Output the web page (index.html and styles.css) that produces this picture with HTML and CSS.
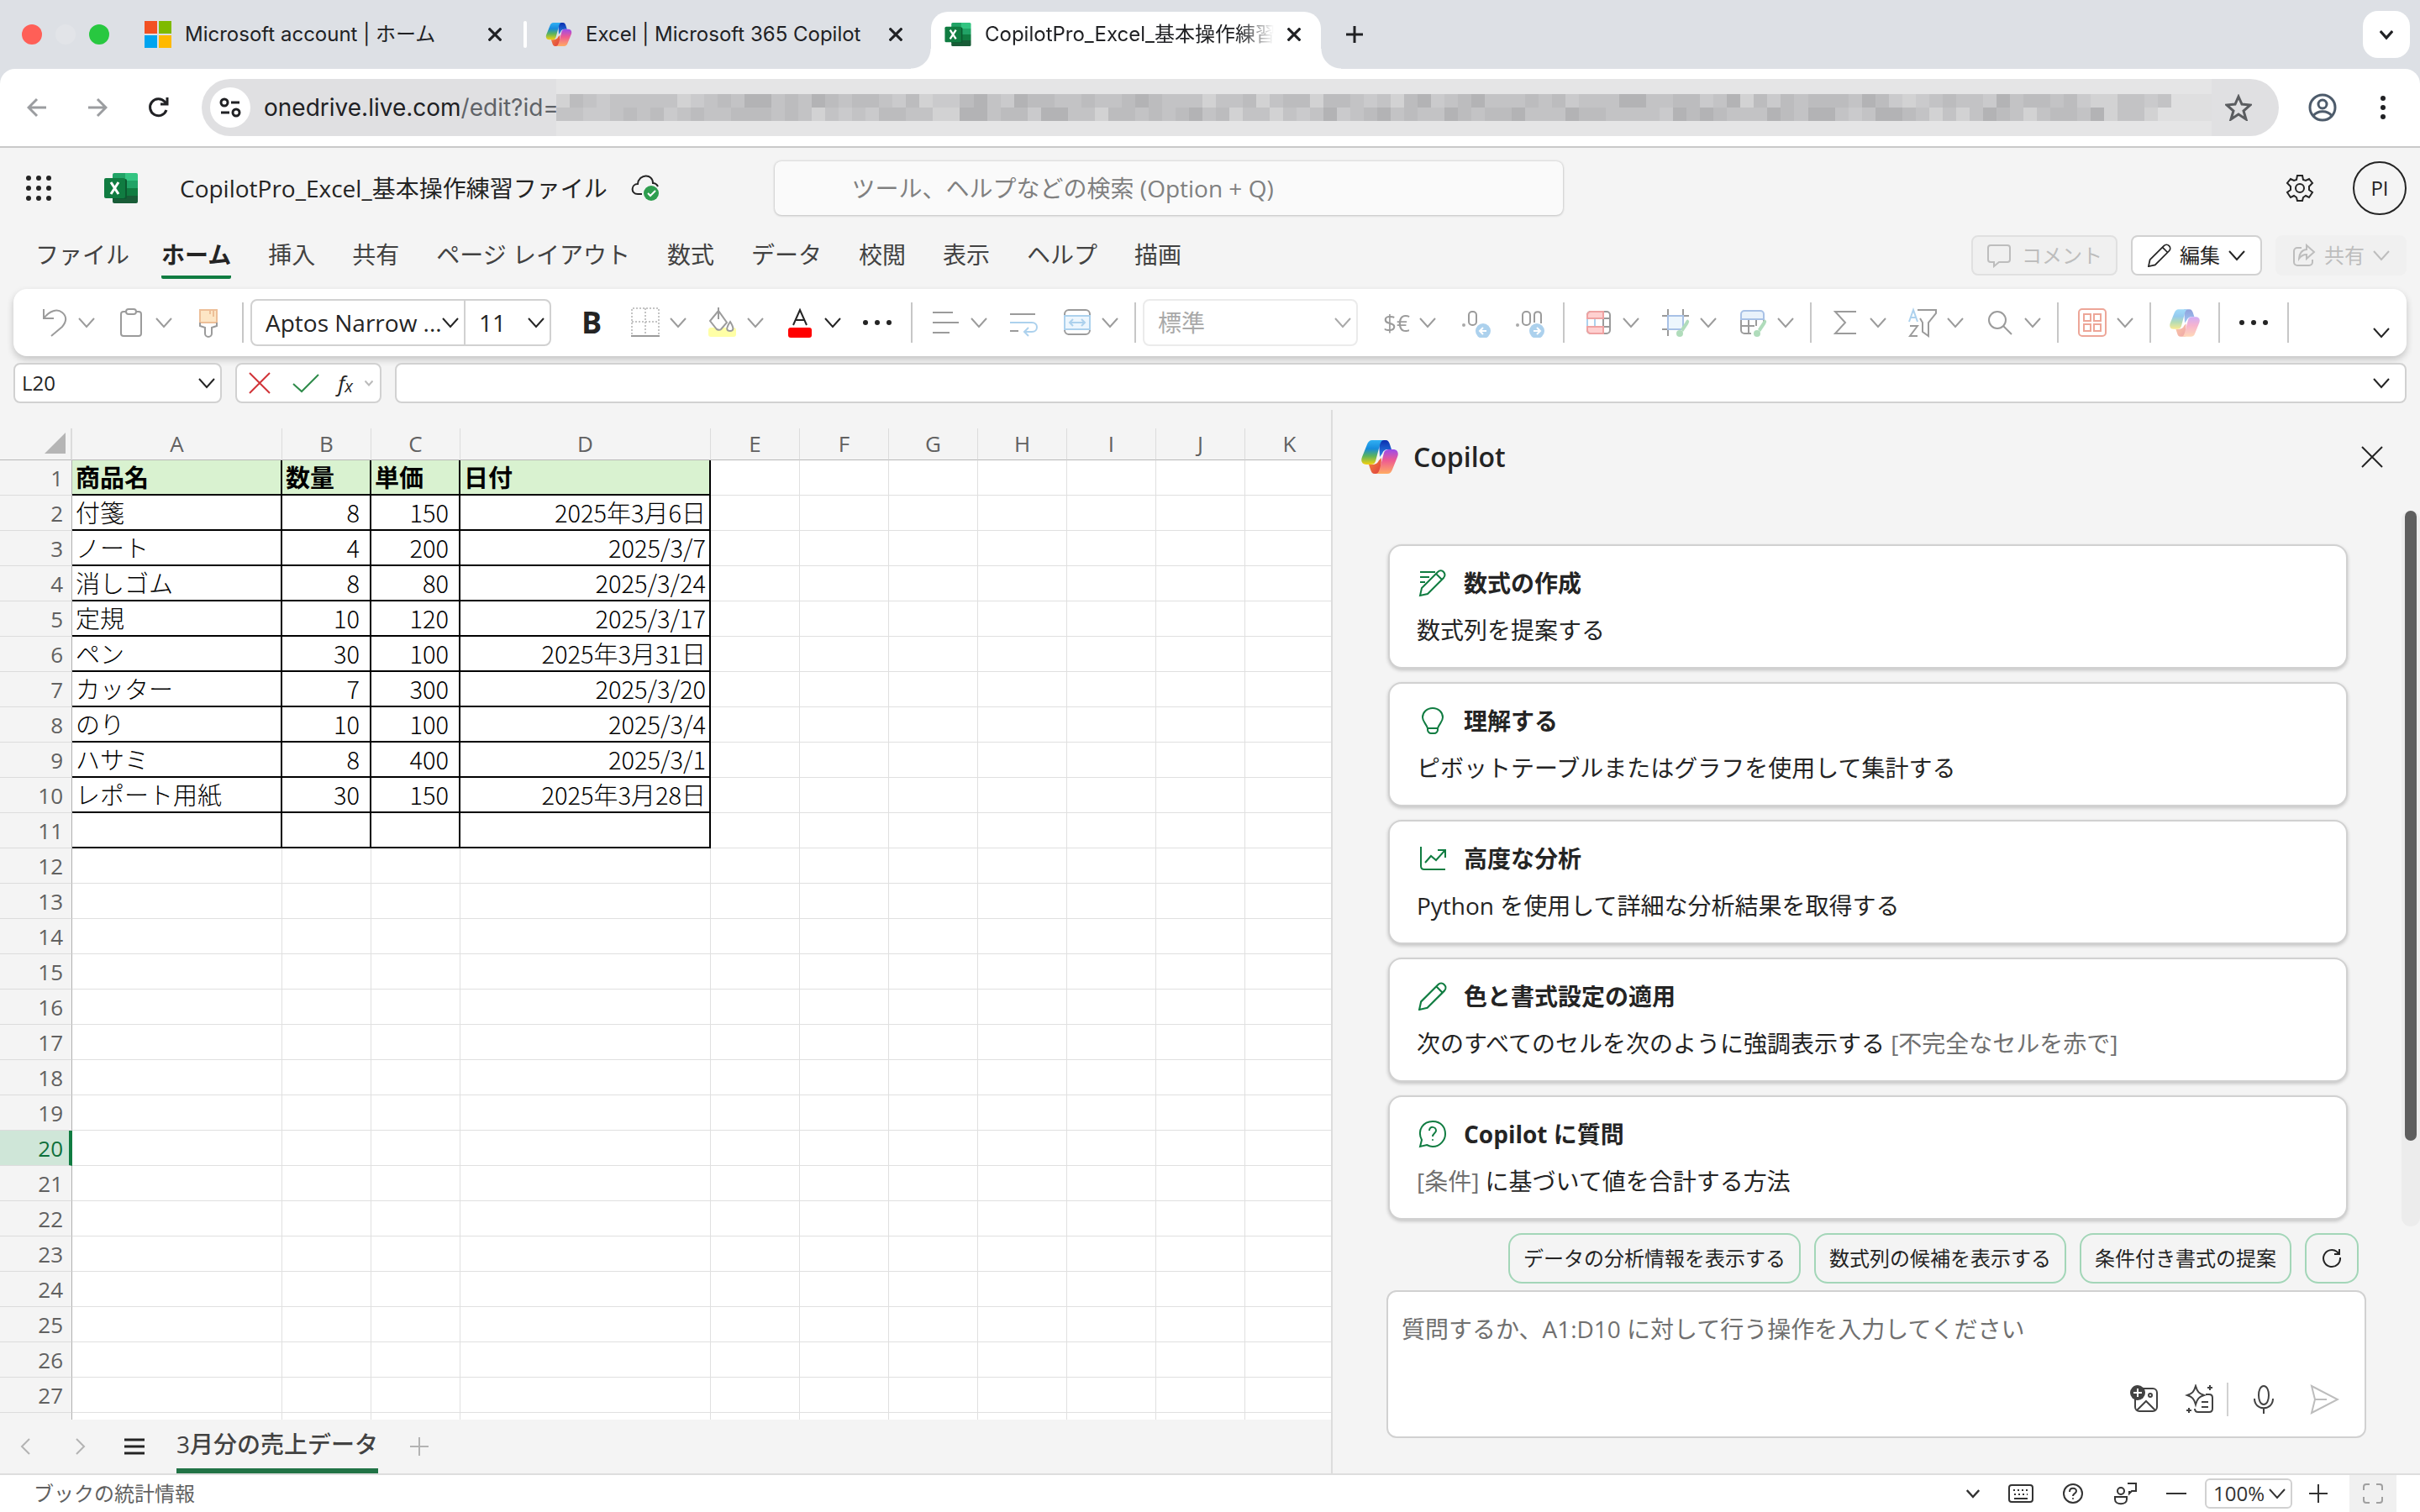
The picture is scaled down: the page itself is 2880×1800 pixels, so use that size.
FILE: index.html
```html
<!DOCTYPE html>
<html lang="ja">
<head>
<meta charset="utf-8">
<title>CopilotPro_Excel_基本操作練習ファイル</title>
<link rel="stylesheet" href="styles.css">
</head>
<body>
<svg class="sprite" width="0" height="0" aria-hidden="true">
  <defs>
    <linearGradient id="gBlue" x1="0" y1="0" x2="0" y2="1"><stop offset="0" stop-color="#0b2fb0"/><stop offset="1" stop-color="#2b86e6"/></linearGradient>
    <linearGradient id="gRed" x1="0" y1="0" x2="1" y2="1"><stop offset="0" stop-color="#f58a3c"/><stop offset="1" stop-color="#dd3b3f"/></linearGradient>
    <linearGradient id="gLeft" x1="0" y1="0" x2="0" y2="1"><stop offset="0" stop-color="#31b0f3"/><stop offset=".35" stop-color="#168bdc"/><stop offset=".65" stop-color="#5cb35c"/><stop offset="1" stop-color="#f6d10f"/></linearGradient>
    <linearGradient id="gRight" x1="0" y1="0" x2="0" y2="1"><stop offset="0" stop-color="#9a4bec"/><stop offset=".45" stop-color="#ee5a92"/><stop offset="1" stop-color="#ffac62"/></linearGradient>
  </defs>
  <symbol id="copilot" viewBox="0 0 44 40">
    <path fill="url(#gBlue)" d="M21 0h8c3 0 4 2 5 5l2 6h-4c-4 0-6 2-7 5l-3 4z"/>
    <path fill="url(#gRed)" d="M23 40h-7c-3 0-4-2-5-5l-2-6h4c4 0 7-2 8-5l3-3z"/>
    <path fill="url(#gLeft)" d="M13 0h14c-3 0-4 3-5 6l-5 19c-1 3-3 4-6 4H6c-5 0-7-4-5-9L7 5c1-3 3-5 6-5z"/>
    <path fill="url(#gRight)" d="M31 40H17c3 0 4-3 5-6l5-19c1-3 3-4 6-4h5c5 0 7 4 5 9l-6 15c-1 3-3 5-6 5z"/>
  </symbol>
  <symbol id="excel" viewBox="0 0 40 36">
    <path fill="#21a366" d="M12 0h14v9H10V2a2 2 0 0 1 2-2z"/><path fill="#33c481" d="M25 0h13a2 2 0 0 1 2 2v7H25z"/>
    <path fill="#107c41" d="M10 9h15v18H10z"/><path fill="#21a366" d="M25 9h15v9H25z"/><path fill="#107c41" d="M25 18h15v9H25z"/>
    <path fill="#185c37" d="M10 27h30v7a2 2 0 0 1-2 2H12a2 2 0 0 1-2-2z"/>
    <path fill="#0b5a30" d="M10 7h15a2 2 0 0 1 2 2v20a2 2 0 0 1-2 2H10z"/>
    <rect fill="#107c41" y="6" width="25" height="24" rx="2"/><path d="M8 11l9 14M17 11L8 25" stroke="#fff" stroke-width="3"/>
  </symbol>
  <symbol id="chev" viewBox="0 0 20 20"><path class="ln" d="M1 5l9 10 9-10"/></symbol>
  <symbol id="x" viewBox="0 0 26 26"><path class="ln" d="M1 1l24 24M25 1L1 25"/></symbol>
  <symbol id="dots" viewBox="0 0 36 36"><g fill="currentColor"><circle cx="4" cy="18" r="3"/><circle cx="18" cy="18" r="3"/><circle cx="32" cy="18" r="3"/></g></symbol>
  <symbol id="pencil" viewBox="0 0 32 32"><path class="ln" d="M1 31l2-9L22 3c2-2 5-2 7 0s2 5 0 7L10 29zM20 5l7 7"/></symbol>
  <symbol id="brush" viewBox="0 0 36 36"><path fill="#52b36b" d="M33 15c2 1 1 3 0 5l-6 9-3-3 6-9c1-2 2-3 3-2z"/><circle cx="23" cy="31" r="4" fill="#52b36b"/></symbol>
</svg>

<header class="browser">
  <div class="tabstrip">
    <div class="lights"><i class="red"></i><i class="grey"></i><i class="green"></i></div>
    <div class="tab tab-one">
      <svg width="32" height="32"><path fill="#f25022" d="M0 0h15v15H0z"/><path fill="#7fba00" d="M17 0h15v15H17z"/><path fill="#00a4ef" d="M0 17h15v15H0z"/><path fill="#ffb900" d="M17 17h15v15H17z"/></svg>
      <span>Microsoft account | ホーム</span>
      <button class="close" aria-label="閉じる"><svg width="16" height="16"><use href="#x"/></svg></button>
    </div>
    <i class="tab-sep"></i>
    <div class="tab tab-two">
      <svg width="32" height="28"><use href="#copilot"/></svg>
      <span>Excel | Microsoft 365 Copilot</span>
      <button class="close" aria-label="閉じる"><svg width="16" height="16"><use href="#x"/></svg></button>
    </div>
    <div class="tab tab-active">
      <svg width="32" height="28"><use href="#excel"/></svg>
      <span>CopilotPro_Excel_基本操作練習</span>
      <button class="close" aria-label="閉じる"><svg width="16" height="16"><use href="#x"/></svg></button>
    </div>
    <button class="newtab" aria-label="新しいタブ"><svg width="20" height="20"><path class="ln" d="M10 0v20M0 10h20"/></svg></button>
    <button class="tablist" aria-label="タブを検索"><svg width="16" height="16"><use href="#chev"/></svg></button>
  </div>
  <div class="navbar">
    <button class="nav off" aria-label="戻る"><svg width="24" height="24"><path class="ln" d="M23 12H2M12 2L2 12l10 10"/></svg></button>
    <button class="nav off" aria-label="進む"><svg width="24" height="24"><path class="ln" d="M1 12h21M12 2l10 10-10 10"/></svg></button>
    <button class="nav" aria-label="再読み込み"><svg width="26" height="26"><path class="ln" d="M23 16a10 10 0 1 1-2-10l3 3M24 1v8h-8"/></svg></button>
    <div class="url">
      <button class="site" aria-label="サイト情報"><svg width="26" height="26"><g class="ln"><circle cx="6" cy="7" r="4"/><path d="M14 7h10M2 19h10"/><circle cx="20" cy="19" r="4"/></g></svg></button>
      <span class="addr">onedrive.live.com<em>/edit?id=</em></span>
      <div class="mosaic" id="mosaic"></div>
      <button class="star" aria-label="ブックマーク"><svg width="32" height="32"><path class="ln" d="M16 3l4 9 10 1-8 7 3 10-9-6-9 6 3-10-8-7 10-1z"/></svg></button>
    </div>
    <button class="nav user" aria-label="プロフィール"><svg width="34" height="34"><g class="ln"><circle cx="17" cy="17" r="15"/><circle cx="17" cy="13" r="5"/><path d="M6 27c5-7 17-7 22 0"/></g></svg></button>
    <button class="nav" aria-label="メニュー"><svg width="8" height="30" fill="#202124"><circle cx="4" cy="4" r="3"/><circle cx="4" cy="15" r="3"/><circle cx="4" cy="26" r="3"/></svg></button>
  </div>
</header>

<header class="app">
  <div class="titlebar">
    <button class="launcher" aria-label="アプリ"><svg width="32" height="32" fill="#242424"><circle cx="4" cy="4" r="3"/><circle cx="16" cy="4" r="3"/><circle cx="28" cy="4" r="3"/><circle cx="4" cy="16" r="3"/><circle cx="16" cy="16" r="3"/><circle cx="28" cy="16" r="3"/><circle cx="4" cy="28" r="3"/><circle cx="16" cy="28" r="3"/><circle cx="28" cy="28" r="3"/></svg></button>
    <svg class="xl" width="40" height="36"><use href="#excel"/></svg>
    <h1>CopilotPro_Excel_基本操作練習ファイル</h1>
    <svg class="cloud" width="34" height="32"><path class="ln" d="M13 23H8C-1 23 0 11 8 11 9-1 26-2 26 10c3 0 5 2 6 4"/><circle cx="24" cy="22" r="9" fill="#2e9e4f"/><path d="M20 22l3 3 6-6" fill="none" stroke="#fff" stroke-width="2"/></svg>
    <input class="search" aria-label="検索" placeholder="ツール、ヘルプなどの検索 (Option + Q)">
    <div class="account">
      <button aria-label="設定"><svg width="34" height="34"><g class="ln"><path d="M14 2h6l1 5 3 1 4-2 4 5-4 4v4l4 3-4 6-4-2-3 2-1 4h-6l-1-4-3-2-4 2-4-6 4-3v-4l-4-4 4-5 4 2 3-1z"/><circle cx="17" cy="17" r="5"/></g></svg></button>
      <button class="avatar">PI</button>
    </div>
  </div>

  <nav class="menu">
    <a href="#">ファイル</a><a href="#" class="on">ホーム</a><a href="#">挿入</a><a href="#">共有</a><a href="#">ページ レイアウト</a><a href="#">数式</a><a href="#">データ</a><a href="#">校閲</a><a href="#">表示</a><a href="#">ヘルプ</a><a href="#">描画</a>
    <div class="actions">
      <button class="pill dim" disabled><svg width="30" height="30"><path class="ln" d="M5 3h20a3 3 0 0 1 3 3v14a3 3 0 0 1-3 3H15l-6 5v-5H5a3 3 0 0 1-3-3V6a3 3 0 0 1 3-3z"/></svg>コメント</button>
      <button class="pill edit"><svg width="28" height="28"><use href="#pencil"/></svg>編集<svg width="20" height="20"><use href="#chev"/></svg></button>
      <button class="pill dim share" disabled><svg width="28" height="28"><path class="ln" d="M11 5H6a4 4 0 0 0-4 4v13a4 4 0 0 0 4 4h14a4 4 0 0 0 4-4v-3M17 2l9 8-9 8v-5c-4 0-7 2-9 5 0-6 4-11 9-11z"/></svg>共有<svg width="20" height="20"><use href="#chev"/></svg></button>
    </div>
  </nav>

  <div class="ribbon">
    <button class="split off" aria-label="元に戻す"><svg width="36" height="36"><path class="ln" d="M6 2v11h12M6 13C13 4 22 1 28 6s5 11 0 17L15 34"/></svg><svg class="cv"><use href="#chev"/></svg></button>
    <button class="split off" aria-label="貼り付け"><svg width="36" height="36"><g class="ln"><rect x="6" y="5" width="24" height="29" rx="3"/><rect x="12" y="2" width="12" height="6" rx="3" fill="#fff"/></g></svg><svg class="cv"><use href="#chev"/></svg></button>
    <button class="plain off" aria-label="書式のコピー"><svg width="36" height="36"><path fill="#fbc97f" stroke="#d9731c" stroke-width="2" d="M8 3h20v15H8z"/><path d="M20 3v5M24 3v8" stroke="#d9731c" stroke-width="2"/><path class="ln" d="M8 18v4l6 2v7a4 4 0 0 0 8 0v-7l6-2v-4"/></svg></button>
    <i class="sep"></i>
    <div class="fontbox">
      <label class="combo face"><select aria-label="フォント"><option>Aptos Narrow ...</option></select><svg class="cv"><use href="#chev"/></svg></label>
      <label class="combo size"><select aria-label="フォント サイズ"><option>11</option></select><svg class="cv"><use href="#chev"/></svg></label>
    </div>
    <button class="plain" aria-label="太字"><b>B</b></button>
    <button class="split off" aria-label="罫線"><svg width="36" height="36"><path class="ln" stroke-dasharray="2 2" opacity=".6" d="M2 32V1h32v31M18 1v31M2 17h32"/><path class="ln" d="M1 34h34"/></svg><svg class="cv"><use href="#chev"/></svg></button>
    <button class="split off" aria-label="塗りつぶし"><svg width="36" height="36"><rect x="1" y="24" width="33" height="11" rx="3" fill="#ffff3c"/><path class="ln solid" d="M13 4L3 16l8 10c2 1 4 1 5 0l7-8zM13 0v14M27 17c-6 9-4 11 0 11s5-3 0-11z"/></svg><svg class="cv"><use href="#chev"/></svg></button>
    <button class="split" aria-label="フォントの色"><svg width="36" height="36"><path class="ln" d="M10 21l8-18 8 18M13 15h10"/><rect x="4" y="24" width="28" height="12" rx="3" fill="#f00"/></svg><svg class="cv"><use href="#chev"/></svg></button>
    <button class="plain" aria-label="その他"><svg width="36" height="36"><use href="#dots"/></svg></button>
    <i class="sep"></i>
    <button class="split off" aria-label="配置"><svg width="36" height="36"><path class="ln" d="M2 6h24M2 18h31M2 30h20"/></svg><svg class="cv"><use href="#chev"/></svg></button>
    <button class="plain off" aria-label="折り返し"><svg width="36" height="36"><path class="ln" d="M2 8h30M2 28h10"/><path class="ln blue" d="M2 18h26c8 0 8 11 0 11h-8M24 24l-5 5 5 5"/></svg></button>
    <button class="split off" aria-label="結合"><svg width="36" height="36"><rect class="ln" x="3" y="3" width="30" height="29" rx="5"/><path fill="#d9ecfb" stroke="#4a9ad8" stroke-width="2" d="M3 10h30v16H3z"/><path class="ln blue" d="M9 18h18M13 14l-4 4 4 4M23 14l4 4-4 4"/></svg><svg class="cv"><use href="#chev"/></svg></button>
    <i class="sep"></i>
    <label class="combo number"><select aria-label="表示形式" disabled><option>標準</option></select><svg class="cv"><use href="#chev"/></svg></label>
    <button class="split off" aria-label="通貨">$€<svg class="cv"><use href="#chev"/></svg></button>
    <button class="plain off" aria-label="小数点以下を減らす"><svg width="36" height="36"><circle cx="4" cy="21" r="2" fill="#444"/><rect class="ln" x="10" y="5" width="9" height="16" rx="4"/><circle cx="27" cy="28" r="9" fill="#4a9ad8"/><path d="M31 28h-8M27 24l-4 4 4 4" stroke="#fff" stroke-width="2" fill="none"/></svg></button>
    <button class="plain off" aria-label="小数点以下を増やす"><svg width="36" height="36"><circle cx="4" cy="21" r="2" fill="#444"/><rect class="ln" x="10" y="5" width="9" height="16" rx="4"/><path class="ln" d="M24 18V9c0-5 8-5 8 0v10"/><circle cx="27" cy="28" r="9" fill="#4a9ad8"/><path d="M23 28h8M27 24l4 4-4 4" stroke="#fff" stroke-width="2" fill="none"/></svg></button>
    <i class="sep"></i>
    <button class="split off" aria-label="削除"><svg width="36" height="36"><rect class="ln" x="5" y="5" width="27" height="26" rx="4"/><path class="ln" d="M5 13h27M5 23h27M24 5v26"/><path fill="#f99" stroke="#d33" stroke-width="2" d="M9 5h15v8H5V9c0-2 2-4 4-4zM5 23h19v8H9c-2 0-4-2-4-4z"/><path class="ln blue" d="M5 14v8M14 14v8"/></svg><svg class="cv"><use href="#chev"/></svg></button>
    <button class="split off" aria-label="書式"><svg width="36" height="36"><path class="ln" d="M9 2v32M27 2v8M2 26h14M2 10h32"/><path fill="#d9ecfb" stroke="#3f78c9" stroke-width="2" d="M9 10h18v16H9z"/><use href="#brush"/></svg><svg class="cv"><use href="#chev"/></svg></button>
    <button class="split off" aria-label="テーブル"><svg width="36" height="36"><path class="ln" d="M4 14v13a4 4 0 0 0 4 4h8M13 14v17M22 14v8M4 22h16M31 14v4"/><path fill="#cfe3f8" stroke="#3f78c9" stroke-width="2" d="M8 4h19a4 4 0 0 1 4 4v6H4V8a4 4 0 0 1 4-4z"/><use href="#brush"/></svg><svg class="cv"><use href="#chev"/></svg></button>
    <i class="sep"></i>
    <button class="split off" aria-label="合計"><svg width="36" height="36"><path class="ln" d="M31 5H6l12 13L6 31h25"/></svg><svg class="cv"><use href="#chev"/></svg></button>
    <button class="split off" aria-label="並べ替え"><svg width="36" height="36"><path class="ln blue" d="M2 17L7 3l5 14M4 12h7"/><path class="ln" d="M3 22h9L3 34h9M12 3h22v4l-9 11v16l-7-5V18l-3-5"/></svg><svg class="cv"><use href="#chev"/></svg></button>
    <button class="split off" aria-label="検索"><svg width="36" height="36"><circle class="ln" cx="15" cy="15" r="10"/><path class="ln" d="M22 22l10 10"/></svg><svg class="cv"><use href="#chev"/></svg></button>
    <i class="sep"></i>
    <button class="split off" aria-label="アドイン"><svg width="36" height="36" fill="none" stroke="#d83b1c" stroke-width="2"><rect x="2" y="2" width="32" height="32" rx="4"/><rect x="8" y="8" width="8" height="8"/><rect x="20" y="8" width="8" height="8"/><rect x="8" y="20" width="8" height="8"/><rect x="20" y="20" width="8" height="8"/></svg><svg class="cv"><use href="#chev"/></svg></button>
    <i class="sep"></i>
    <button class="plain off" aria-label="Copilot"><svg width="36" height="33"><use href="#copilot"/></svg></button>
    <i class="sep"></i>
    <button class="plain" aria-label="その他"><svg width="36" height="36"><use href="#dots"/></svg></button>
    <i class="sep"></i>
    <button class="expand" aria-label="リボンの表示"><svg class="cv"><use href="#chev"/></svg></button>
  </div>

  <div class="formulabar">
    <div class="namebox"><input aria-label="名前ボックス" value="L20"><svg class="cv"><use href="#chev"/></svg></div>
    <div class="fxbox">
      <button class="cancel" aria-label="キャンセル"><svg width="26" height="26"><use href="#x"/></svg></button>
      <button class="enter" aria-label="入力"><svg width="32" height="26"><path class="ln" d="M1 14l10 9L31 3"/></svg></button>
      <button class="fx" aria-label="関数の挿入"><i>f</i><i class="sub">x</i></button>
      <svg class="tiny" width="10" height="10"><use href="#chev"/></svg>
    </div>
    <div class="formula"><input aria-label="数式バー"><svg class="cv"><use href="#chev"/></svg></div>
  </div>
</header>

<main>
  <section class="sheet">
    <div class="gridwrap">
      <table id="grid">
        <colgroup><col class="c-head"><col class="c-a"><col class="c-n"><col class="c-n"><col class="c-d"><col class="c-n"><col class="c-n"><col class="c-n"><col class="c-n"><col class="c-n"><col class="c-n"><col class="c-n"></colgroup>
        <thead><tr><th class="corner"><svg width="26" height="26"><path fill="#b5b5b5" d="M25 0v25H0z"/></svg></th><th>A</th><th>B</th><th>C</th><th>D</th><th>E</th><th>F</th><th>G</th><th>H</th><th>I</th><th>J</th><th>K</th></tr></thead>
        <tbody>
          <tr class="rec head"><th>1</th><td>商品名</td><td>数量</td><td>単価</td><td>日付</td></tr>
          <tr class="rec"><th>2</th><td>付箋</td><td>8</td><td>150</td><td>2025年3月6日</td></tr>
          <tr class="rec"><th>3</th><td>ノート</td><td>4</td><td>200</td><td>2025/3/7</td></tr>
          <tr class="rec"><th>4</th><td>消しゴム</td><td>8</td><td>80</td><td>2025/3/24</td></tr>
          <tr class="rec"><th>5</th><td>定規</td><td>10</td><td>120</td><td>2025/3/17</td></tr>
          <tr class="rec"><th>6</th><td>ペン</td><td>30</td><td>100</td><td>2025年3月31日</td></tr>
          <tr class="rec"><th>7</th><td>カッター</td><td>7</td><td>300</td><td>2025/3/20</td></tr>
          <tr class="rec"><th>8</th><td>のり</td><td>10</td><td>100</td><td>2025/3/4</td></tr>
          <tr class="rec"><th>9</th><td>ハサミ</td><td>8</td><td>400</td><td>2025/3/1</td></tr>
          <tr class="rec"><th>10</th><td>レポート用紙</td><td>30</td><td>150</td><td>2025年3月28日</td></tr>
          <tr class="rec"><th>11</th><td></td><td></td><td></td><td></td></tr>
        </tbody>
      </table>
    </div>
    <div class="sheettabs">
      <button class="off" aria-label="前のシート"><svg width="12" height="20"><path class="ln" d="M11 1L2 10l9 9"/></svg></button>
      <button class="off" aria-label="次のシート"><svg width="12" height="20"><path class="ln" d="M1 1l9 9-9 9"/></svg></button>
      <button aria-label="すべてのシート"><svg width="24" height="20"><path class="ln" d="M0 2h24M0 10h24M0 18h24"/></svg></button>
      <button class="sheettab">3月分の売上データ</button>
      <button class="off" aria-label="新しいシート"><svg width="22" height="22"><path class="ln" d="M11 0v22M0 11h22"/></svg></button>
    </div>
  </section>

  <aside class="pane">
    <div class="panehead"><svg width="44" height="40"><use href="#copilot"/></svg><h2>Copilot</h2><button aria-label="閉じる"><svg width="26" height="26"><use href="#x"/></svg></button></div>
    <div class="cards">
      <button class="card"><strong><svg width="34" height="34"><path class="ln" d="M2 4h18M2 10h11M2 16h6"/><path class="ln" d="M2 32l2-9L23 4c5-5 11 2 7 7L11 30zM21 6l7 7"/></svg>数式の作成</strong><span>数式列を提案する</span></button>
      <button class="card"><strong><svg width="34" height="34"><path class="ln" d="M17 2c-7 0-12 5-12 11 0 5 4 7 6 13v2c0 2 2 4 4 4h4c2 0 4-2 4-4v-2c2-6 6-8 6-13 0-6-5-11-12-11zM11 26h12"/></svg>理解する</strong><span>ピボットテーブルまたはグラフを使用して集計する</span></button>
      <button class="card"><strong><svg width="34" height="34"><path class="ln" d="M3 3v23c0 3 2 4 4 4h25M8 22l7-8 6 5 10-11M23 7h9v9"/></svg>高度な分析</strong><span>Python を使用して詳細な分析結果を取得する</span></button>
      <button class="card"><strong><svg width="34" height="34"><use href="#pencil"/></svg>色と書式設定の適用</strong><span>次のすべてのセルを次のように強調表示する <em>[不完全なセルを赤で]</em></span></button>
      <button class="card"><strong><svg width="34" height="34"><path class="ln" d="M2 32l2-8C-2 12 6 2 17 2s15 8 15 15-6 15-15 15c-3 0-5-1-7-2zM13 13c0-6 8-5 8 0 0 3-4 3-4 7"/><circle cx="17" cy="24" r="1" fill="currentColor"/></svg>Copilot に質問</strong><span><em>[条件]</em> に基づいて値を合計する方法</span></button>
      <div class="scroll"><i></i></div>
    </div>
    <div class="chips">
      <button>データの分析情報を表示する</button><button>数式列の候補を表示する</button><button>条件付き書式の提案</button>
      <button class="again" aria-label="更新"><svg width="24" height="24"><path class="ln" d="M22 11a10 10 0 1 1-4-7l3 3M21 1v6h-6"/></svg></button>
    </div>
    <div class="prompt">
      <textarea rows="1" aria-label="メッセージ" placeholder="質問するか、A1:D10 に対して行う操作を入力してください"></textarea>
      <div class="tools">
        <button aria-label="画像を追加"><svg width="36" height="36"><rect class="ln" x="7" y="5" width="26" height="27" rx="5"/><path class="ln" d="M9 31l11-11 11 11"/><circle class="ln" cx="25" cy="13" r="2"/><circle cx="10" cy="10" r="9" fill="#424242"/><path d="M10 5v10M5 10h10" stroke="#fff" stroke-width="2"/></svg></button>
        <button aria-label="プロンプト"><svg width="36" height="36"><path class="ln" d="M13 2c2 7 4 9 10 11-6 2-8 4-10 11-2-7-4-9-10-11 6-2 8-4 10-11zM25 12h4c3 0 4 2 4 4v13c0 3-2 4-4 4H16c-2 0-4-1-4-4M20 21h8M20 27h8M30 1v6M27 4h6M5 28v6M2 31h6"/></svg></button>
        <i></i>
        <button aria-label="マイク"><svg width="36" height="36"><path class="ln" d="M18 2c-8 0-8 22 0 22s8-22 0-22zM7 17c0 15 22 15 22 0M18 28v7"/></svg></button>
        <button class="off" aria-label="送信"><svg width="36" height="36"><path class="ln" d="M3 2l31 16L3 34l4-16zM7 18h14"/></svg></button>
      </div>
    </div>
  </aside>
</main>

<footer>
  <span>ブックの統計情報</span>
  <div class="status">
    <button class="more" aria-label="その他"><svg width="16" height="16"><use href="#chev"/></svg></button>
    <button aria-label="キーボード"><svg width="30" height="22"><rect class="ln" x="1" y="1" width="28" height="20" rx="3"/><path class="ln" stroke-dasharray="2 3" d="M6 7h18M7 12h16"/><path class="ln" d="M7 17h16"/></svg></button>
    <button aria-label="ヘルプ"><svg width="26" height="26"><circle class="ln" cx="13" cy="13" r="11"/><path class="ln" d="M9 11c0-6 8-5 8-1 0 3-4 3-4 6"/><circle cx="13" cy="19" r="1" fill="currentColor"/></svg></button>
    <button aria-label="フィードバック"><svg width="30" height="28"><circle class="ln" cx="10" cy="11" r="4"/><path class="ln" d="M3 18h14v3c0 7-14 7-14 0zM18 2h10v9h-5l-3 3v-3"/></svg></button>
    <button aria-label="縮小"><svg width="24" height="24"><path class="ln" d="M0 12h24"/></svg></button>
    <label class="combo zoom"><select aria-label="ズーム"><option>100%</option></select><svg class="cv"><use href="#chev"/></svg></label>
    <button aria-label="拡大"><svg width="22" height="22"><path class="ln" d="M11 0v22M0 11h22"/></svg></button>
    <button class="full" aria-label="全画面"><svg width="24" height="24"><path class="ln" d="M1 8V4c0-2 1-3 3-3h4M16 1h4c2 0 3 1 3 3v4M1 16v4c0 2 1 3 3 3h4M16 23h4c2 0 3-1 3-3v-4"/></svg></button>
  </div>
</footer>
<script src="script.js"></script>
</body>
</html>
```
FILE: styles.css
```css
* { box-sizing: border-box; }
body {
  margin: 0; min-height: 100vh; display: flex; flex-direction: column; overflow: hidden;
  background: #f4f4f4; color: #242424;
  font-family: "Open Sans", "Noto Sans CJK JP", sans-serif; font-size: 28px; line-height: 40px;
}
button, input, select, textarea { font: inherit; color: inherit; border: 0; padding: 0; margin: 0; background: none; }
button { display: flex; align-items: center; justify-content: center; flex-shrink: 0; }
select { appearance: none; opacity: 1; }
svg { display: block; flex-shrink: 0; color: inherit; }
em { font-style: normal; }
.sprite { position: absolute; }
.ln { fill: none; stroke: currentColor; stroke-width: var(--stroke, 2); }
.ln.solid { fill: #fff; }
.blue { color: #4a9ad8; }
.cv { width: 20px; height: 20px; }

/* browser chrome */
.browser { background: #dde0e5; font-family: Inter, "Noto Sans CJK JP", sans-serif; color: #202124; }
.tabstrip { height: 82px; display: flex; align-items: center; padding: 0 12px 0 26px; }
.lights { display: flex; gap: 16px; width: 146px; }
.lights i { width: 24px; height: 24px; border-radius: 50%; }
.red { background: #ff5f57; } .grey { background: #e2e4e8; } .green { background: #28c840; }
.tab { display: flex; align-items: center; gap: 16px; font-size: 24px; white-space: nowrap; }
.tab span { flex: 1; overflow: hidden; }
.tab-one { width: 425px; margin-right: 26px; }
.tab-two { width: 425px; }
.tab-sep { width: 4px; height: 32px; background: #fff; border-radius: 2px; margin-right: 22px; }
.close { --stroke: 5; }
.tablist { --stroke: 4; }
.tab-active { position: relative; align-self: flex-end; width: 464px; height: 68px; margin-left: 34px; padding: 0 24px 14px 16px; background: #fff; border-radius: 20px 20px 0 0; }
.tab-active span { -webkit-mask-image: linear-gradient(90deg, #000 88%, transparent); mask-image: linear-gradient(90deg, #000 88%, transparent); }
.tab-active::before, .tab-active::after { content: ""; position: absolute; bottom: 0; width: 24px; height: 24px; }
.tab-active::before { left: -24px; background: radial-gradient(circle at 0 0, transparent 23px, #fff 24px); }
.tab-active::after { right: -24px; background: radial-gradient(circle at 100% 0, transparent 23px, #fff 24px); }
.newtab { margin-left: 30px; --stroke: 3; }
.tablist { margin-left: auto; width: 56px; height: 56px; border-radius: 18px; background: #fff; }
.navbar { height: 94px; display: flex; align-items: center; padding: 0 8px; background: #fff; border-bottom: 2px solid #c9c9c9; border-radius: 18px 18px 0 0; --stroke: 3; }
.nav { width: 72px; height: 72px; color: #202124; }
.nav.off { color: #9b9da0; }
.nav.user { color: #4d5b6b; margin-left: 16px; }
.url { flex: 1; height: 68px; margin-left: 16px; display: flex; align-items: center; background: #e0e0e2; border-radius: 34px; padding: 0 32px 0 10px; }
.site { width: 48px; height: 48px; border-radius: 50%; background: #fff; }
.addr { margin-left: 16px; width: 348px; white-space: nowrap; }
.addr em { color: #5f6368; }
.mosaic { flex: 1; height: 68px; padding: 18px 0; background: #e5e5e6; display: grid; grid-template-rows: 16px 16px; grid-auto-flow: column; grid-auto-columns: 1fr; }
.star { margin-left: 16px; color: #5b5d60; }

/* title bar and menu */
.titlebar { height: 96px; padding: 0 16px 0 30px; display: flex; align-items: center; }
.xl { margin-left: 62px; }
h1 { margin: 0 0 0 50px; font-size: 28px; font-weight: 400; white-space: nowrap; }
.cloud { margin-left: 28px; }
.search { position: absolute; left: 32%; width: 938px; height: 64px; background: #fafafa; border-radius: 8px; padding: 0 92px; box-shadow: 0 0 3px #0003, 0 1px 3px #0002; }
.search::placeholder { color: #808080; }
.account { margin-left: auto; display: flex; align-items: center; gap: 46px; }
.avatar { width: 64px; height: 64px; border: 2px solid #242424; border-radius: 50%; font-size: 24px; }
.menu { height: 72px; display: flex; align-items: center; gap: 44px; padding: 0 16px 8px 42px; }
.menu a { color: #424242; text-decoration: none; white-space: nowrap; height: 56px; line-height: 54px; border-bottom: 4px solid transparent; border-radius: 2px; }
.menu a:first-child { margin-right: -6px; }
.menu .on { font-weight: 700; color: #242424; border-color: #107c41; }
.actions { margin-left: auto; display: flex; gap: 16px; }
.pill { height: 48px; padding: 0 16px; gap: 12px; font-size: 24px; border: 2px solid #d1d1d1; border-radius: 8px; background: #fff; white-space: nowrap; }
.pill.edit, .pill.share { padding: 0 18px; gap: 10px; }
.pill.dim { color: #bdbdbd; background: #f0f0f0; border-color: #e0e0e0; }
.pill.share { border-color: #f0f0f0; }

/* ribbon */
.ribbon { height: 80px; margin: 0 16px; padding: 0 16px; display: flex; align-items: center; background: #fff; border-radius: 16px; box-shadow: 0 4px 8px #0003; }
.plain { width: 64px; height: 64px; }
.plain b { font-size: 36px; }
.split { width: 92px; height: 64px; justify-content: flex-start; padding-left: 14px; gap: 11px; }
.ribbon .off { opacity: .45; }
.sep { width: 2px; height: 48px; margin: 0 8px; background: #c7c7c7; flex-shrink: 0; }
.fontbox { display: flex; width: 358px; height: 56px; border: 2px solid #d1d1d1; border-radius: 8px; margin-right: 16px; flex-shrink: 0; }
.combo { position: relative; display: flex; align-items: center; flex-shrink: 0; }
.combo select { width: 100%; height: 100%; padding-left: 16px; }
.combo .cv { position: absolute; right: 6px; pointer-events: none; }
.face { width: 254px; border-right: 2px solid #d1d1d1; }
.size { flex: 1; }
.number { width: 256px; height: 56px; border: 2px solid #ebebeb; border-radius: 8px; margin-right: 16px; color: #a9a9a9; }
.expand { margin-left: auto; align-self: flex-end; padding: 18px 4px; }

/* formula bar */
.formulabar { display: flex; gap: 16px; padding: 8px 16px; }
.namebox, .fxbox, .formula { height: 48px; display: flex; align-items: center; background: #fff; border: 2px solid #d1d1d1; border-radius: 8px; padding: 0 6px 0 8px; }
.namebox { width: 248px; font-size: 24px; }
.namebox input, .formula input { flex: 1; min-width: 0; }
.fxbox { width: 174px; padding: 0 8px 0 14px; justify-content: space-between; }
.formula { flex: 1; padding-right: 18px; }
.cancel { color: #d13438; } .enter { color: #2e8b4a; margin-left: 12px; } .tiny { color: #bbb; --stroke: 4; }
.fx { font-size: 26px; margin-left: 8px; }
.fx .sub { font-size: 20px; padding-top: 8px; }

/* sheet */
main { flex: 1; display: flex; min-height: 0; }
.sheet { width: 55%; display: flex; flex-direction: column; min-width: 0; }
.gridwrap { flex: 1 1 0; overflow: hidden; padding-top: 22px; }
table { border-collapse: separate; border-spacing: 0; table-layout: fixed; width: 1588px; }
.c-head { width: 86px; } .c-a { width: 250px; } .c-n { width: 106px; } .c-d { width: 298px; }
th { font-weight: 400; color: #616161; font-size: 26px; line-height: 36px; padding: 0; background: #f4f4f4; border-right: 1px solid #dcdcdc; overflow: hidden; }
thead th { height: 38px; line-height: 34px; padding-bottom: 2px; border-bottom: 1px solid #b8b8b8; }
.corner { border-right: 2px solid #dcdcdc; }
.corner svg { margin-left: 53px; }
tbody th { text-align: right; padding-right: 10px; border-bottom: 1px solid #dcdcdc; border-right-color: #b0b0b0; }
td { height: 42px; padding: 0 4px 2px; line-height: 36px; background: #fff; border-right: 1px solid #e0e0e0; border-bottom: 1px solid #e0e0e0; font-family: "Noto Sans CJK JP", sans-serif; font-size: 29px; font-weight: 300; color: #000; white-space: nowrap; }
.rec td:nth-child(-n+5) { border-right: 2px solid #000; border-bottom: 2px solid #000; text-align: right; }
.rec td:nth-child(2), .rec.head td:nth-child(-n+5) { text-align: left; }
.rec td:nth-child(3), .rec td:nth-child(4) { padding-right: 12px; }
.rec.head td:nth-child(-n+5) { background: #d9f2d0; font-weight: 700; }
.sel th { background: #cfe6d8; color: #0f703b; border-right: 4px solid #107c41; padding-right: 7px; }
.sheettabs { height: 64px; display: flex; align-items: center; padding-left: 24px; }
.sheettabs .off { color: #b3b3b3; }
.sheettabs button:nth-child(2) { margin-left: 54px; }
.sheettabs button:nth-child(3) { margin-left: 46px; --stroke: 3; }
.sheettabs .sheettab { margin: 0 38px; height: 64px; font-weight: 500; color: #424242; border-bottom: 6px solid #217346; }

/* copilot pane */
.pane { width: 45%; border-left: 2px solid #dcdcdc; display: flex; flex-direction: column; padding-bottom: 42px; }
.panehead { display: flex; align-items: center; padding: 36px 44px 0 34px; height: 76px; }
h2 { margin: 0 auto 0 18px; font-size: 32px; font-weight: 600; }
.cards { position: relative; margin-top: 84px; padding: 0 86px 0 66px; display: flex; flex-direction: column; gap: 16px; }
.card { height: 148px; flex-direction: column; align-items: flex-start; justify-content: flex-start; gap: 16px; padding: 24px 32px; background: #fff; border: 2px solid #d1d1d1; border-radius: 16px; box-shadow: 0 2px 4px #0003; text-align: left; }
.card strong { display: flex; align-items: center; gap: 20px; }
.card strong svg { color: #107c41; margin-left: 2px; }
.card em { color: #707070; }
.scroll { position: absolute; right: 0; top: -40px; bottom: -8px; width: 22px; padding: 0 4px; background: #ececec; border-radius: 11px; }
.scroll i { display: block; height: 88%; background: #5e5e5e; border-radius: 7px; }
.chips { display: flex; justify-content: flex-end; gap: 16px; margin: 16px 73px 8px; }
.chips button { height: 60px; padding: 0 16px; font-size: 24px; border: 2px solid #a3d6b8; border-radius: 16px; white-space: nowrap; }
.chips .again { width: 64px; }
.prompt { flex: 1; margin: 0 64px; background: #fff; border: 2px solid #d1d1d1; border-radius: 12px; padding: 24px 30px 0 16px; display: flex; flex-direction: column; justify-content: space-between; color: #424242; }
.prompt textarea { width: 100%; height: 44px; resize: none; overflow: hidden; outline: 0; }
.prompt textarea::placeholder { color: #707070; }
.tools { display: flex; align-items: center; justify-content: flex-end; gap: 30px; padding-bottom: 24px; }
.tools i { width: 2px; height: 40px; background: #d1d1d1; margin: 0 -6px 0 -16px; }
.tools .off { color: #bdbdbd; margin-left: 6px; }

/* status bar */
footer { height: 46px; display: flex; align-items: center; padding: 0 28px 0 40px; background: #fff; border-top: 2px solid #dedede; color: #616161; font-size: 24px; }
.status { margin-left: auto; display: flex; align-items: center; color: #333; gap: 34px; }
.status .more { --stroke: 3; }
.status .zoom { width: 104px; height: 36px; border: 2px solid #d1d1d1; border-radius: 6px; margin: 0 -14px 0 -12px; }
.zoom select { padding-left: 8px; line-height: 30px; }
.full { width: 56px; height: 44px; background: #f0f0f0; color: #a0a0a0; margin-left: -8px; }
```
FILE: script.js
```js
// Blank cells E-K beside the records, then the blank rows below them.
const body = document.querySelector('#grid tbody');
for (const row of body.rows) {
  for (let i = 0; i < 7; i++) row.insertCell();
}
for (let n = 12; n <= 28; n++) {
  const row = body.insertRow();
  const th = document.createElement('th');
  // The last row only peeks out above the sheet tabs and carries no number.
  th.textContent = n < 28 ? n : '';
  row.append(th);
  for (let i = 0; i < 11; i++) row.insertCell();
  if (n === 20) row.className = 'sel';
}

// Pixelated part of the address: two rows of grey squares, filled column by column.
const shades = ['#b3b3b5', '#bcbcbe', '#c3c3c5', '#cacacc', '#d2d2d3'];
const mosaic = document.getElementById('mosaic');
let seed = 7;
for (let i = 0; i < 246; i++) {
  seed = (seed * 1103515245 + 12345) % 2147483648;
  const cell = document.createElement('i');
  cell.style.background = i > 238 ? '#dfdfe0' : shades[[2, 1, 2, 1, 3, 2, 0, 1, 2, 4][(seed >> 12) % 10]];
  mosaic.append(cell);
}
```
